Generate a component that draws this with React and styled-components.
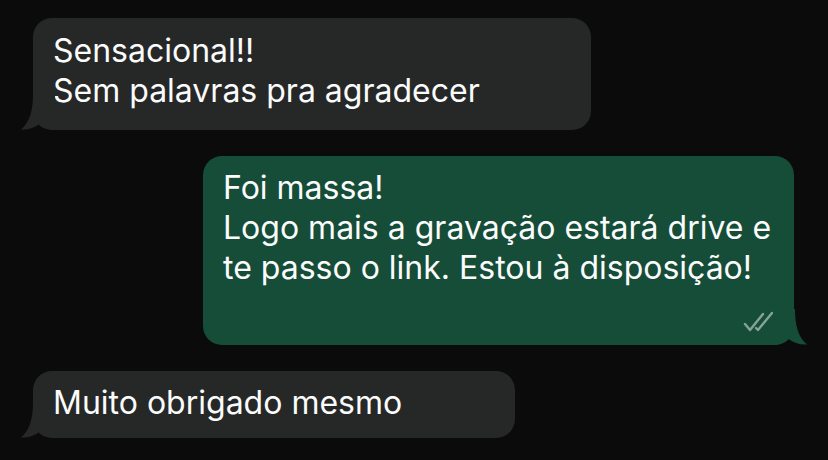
import React from 'react';
import styled, { createGlobalStyle } from 'styled-components';

const GlobalStyle = createGlobalStyle`
  body {
    margin: 0;
    background: #0b0b0b;
    font-family: Inter, "Noto Sans", sans-serif;
    -webkit-font-smoothing: antialiased;
  }
`;

const INCOMING = '#262828';
const OUTGOING = '#154d38';

const Chat = styled.div`
  display: flex;
  flex-direction: column;
  gap: 26px;
  padding: 18px 34px 0 33px;
  height: 460px;
  box-sizing: border-box;
  overflow: hidden;
`;

const Row = styled.div`
  display: flex;
  justify-content: ${({ $out }) => ($out ? 'flex-end' : 'flex-start')};
`;

const Bubble = styled.div`
  position: relative;
  box-sizing: border-box;
  width: ${({ $w }) => $w}px;
  padding: ${({ $pad }) => $pad};
  background: ${({ $out }) => ($out ? OUTGOING : INCOMING)};
  border-radius: 19px;
  color: #fbfbfb;
  font-size: 32px;
  line-height: 40px;
`;

const Line = styled.div`
  white-space: nowrap;
`;

const Meta = styled.div`
  display: flex;
  justify-content: flex-end;
  padding: 23px 2px 0 0;
  height: 21px;
`;

const TailSvg = styled.svg`
  position: absolute;
  bottom: 0;
  ${({ $out }) => ($out ? 'right: -13px; transform: scaleX(-1);' : 'left: -12px;')}
  width: 34px;
  height: 36px;
  fill: ${({ $out }) => ($out ? OUTGOING : INCOMING)};
`;

const Tail = ({ out }) => (
  <TailSvg $out={out} viewBox="0 0 34 36">
    <path d="M12 0 C12 16 9 28 0 35.5 C7 36 13 34 19 29.5 C22 33.5 27 36 34 36 L34 0 Z" />
  </TailSvg>
);

const Ticks = () => (
  <svg width="32" height="21" viewBox="0 0 32 21" fill="none" stroke="#86a496" strokeWidth="2.4" strokeLinecap="round" strokeLinejoin="round">
    <path d="M2 13 L7 19 L20 3" />
    <path d="M13 17 L15 19 L29 2" />
  </svg>
);

export default function App() {
  return (
    <>
      <GlobalStyle />
      <Chat>
        <Row>
          <Bubble $w={558} $pad="13px 20px 19px">
            <Line>Sensacional!!</Line>
            <Line>Sem palavras pra agradecer</Line>
            <Tail />
          </Bubble>
        </Row>
        <Row $out>
          <Bubble $out $w={591} $pad="12px 17px 13px 20px">
            <Line>Foi massa!</Line>
            <Line>Logo mais a gravação estará drive e</Line>
            <Line>te passo o link. Estou à disposição!</Line>
            <Meta>
              <Ticks />
            </Meta>
            <Tail out />
          </Bubble>
        </Row>
        <Row>
          <Bubble $w={482} $pad="12px 20px 15px">
            <Line>Muito obrigado mesmo</Line>
            <Tail />
          </Bubble>
        </Row>
      </Chat>
    </>
  );
}
